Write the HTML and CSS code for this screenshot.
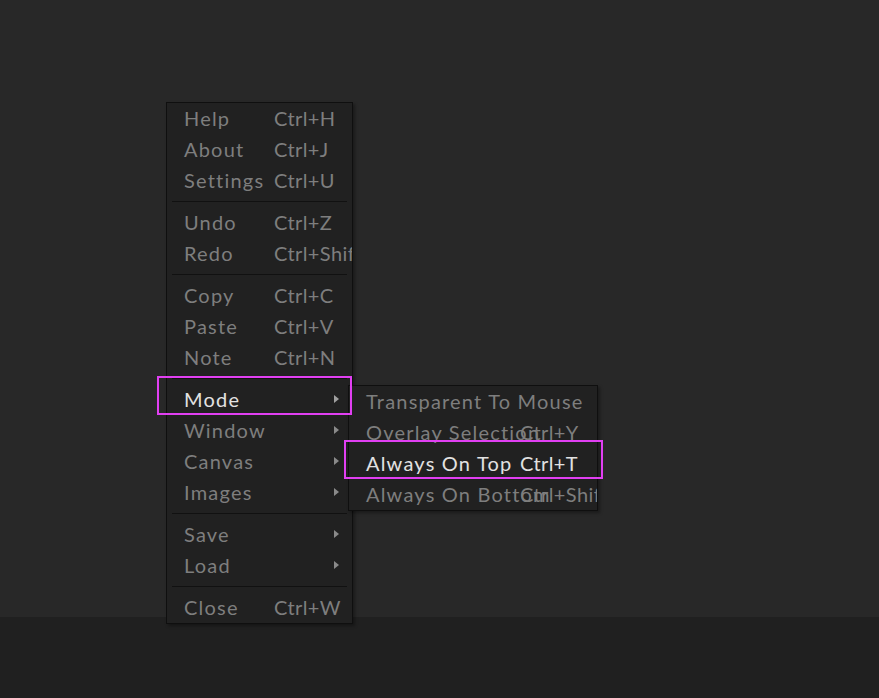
FILE: index.html
```html
<!DOCTYPE html>
<html>
<head>
<meta charset="utf-8">
<link rel="stylesheet" href="styles.css">
</head>
<body>
<div class="stage"></div>
<div class="footer"></div>

<div class="menu main-menu">
  <div class="item"><span class="label">Help</span><span class="key">Ctrl+H</span></div>
  <div class="item"><span class="label">About</span><span class="key">Ctrl+J</span></div>
  <div class="item"><span class="label">Settings</span><span class="key">Ctrl+U</span></div>
  <div class="sep"></div>
  <div class="item"><span class="label">Undo</span><span class="key">Ctrl+Z</span></div>
  <div class="item"><span class="label">Redo</span><span class="key">Ctrl+Shift+Z</span></div>
  <div class="sep"></div>
  <div class="item"><span class="label">Copy</span><span class="key">Ctrl+C</span></div>
  <div class="item"><span class="label">Paste</span><span class="key">Ctrl+V</span></div>
  <div class="item"><span class="label">Note</span><span class="key">Ctrl+N</span></div>
  <div class="sep"></div>
  <div class="item active"><span class="label">Mode</span><span class="arrow"></span></div>
  <div class="item"><span class="label">Window</span><span class="arrow"></span></div>
  <div class="item"><span class="label">Canvas</span><span class="arrow"></span></div>
  <div class="item"><span class="label">Images</span><span class="arrow"></span></div>
  <div class="sep"></div>
  <div class="item"><span class="label">Save</span><span class="arrow"></span></div>
  <div class="item"><span class="label">Load</span><span class="arrow"></span></div>
  <div class="sep"></div>
  <div class="item"><span class="label">Close</span><span class="key">Ctrl+W</span></div>
</div>

<div class="menu sub-menu">
  <div class="item"><span class="label">Transparent To Mouse</span></div>
  <div class="item"><span class="label">Overlay Selection</span><span class="key">Ctrl+Y</span></div>
  <div class="item active"><span class="label">Always On Top</span><span class="key">Ctrl+T</span></div>
  <div class="item"><span class="label">Always On Bottom</span><span class="key">Ctrl+Shift+B</span></div>
</div>

<div class="focus focus-mode"></div>
<div class="focus focus-top"></div>
</body>
</html>
```

FILE: styles.css
```css
html, body {
  margin: 0;
  padding: 0;
  height: 100%;
}
body {
  display: flex;
  flex-direction: column;
  background: #282828;
  font-family: "Lato", "Noto Sans", sans-serif;
  overflow: hidden;
}
.stage {
  flex: 1;
  background: #282828;
}
.footer {
  height: 81px;
  background: #202020;
}
.menu {
  position: absolute;
  background: #212121;
  border: 1px solid #0f0f0f;
  box-shadow: 2px 2px 3px rgba(0, 0, 0, 0.35);
  overflow: hidden;
  font-size: 20px;
  color: #7e7e7e;
}
.main-menu {
  left: 166px;
  top: 102px;
  width: 185px;
}
.sub-menu {
  left: 348px;
  top: 385px;
  width: 248px;
}
.item {
  position: relative;
  height: 31px;
  box-sizing: border-box;
  padding-bottom: 2px;
  display: flex;
  align-items: center;
  padding-left: 17px;
  white-space: nowrap;
}
.label {
  letter-spacing: 1.2px;
}
.main-menu .label {
  flex: 0 0 90px;
}
.sub-menu .label {
  flex: 0 0 154px;
  width: 0;
  overflow: visible;
}
.key {
  flex: none;
  letter-spacing: 0.4px;
}
.item.active {
  color: #e2e2e2;
}
.arrow {
  position: absolute;
  right: 13px;
  top: 11px;
  width: 0;
  height: 0;
  border-top: 4.5px solid transparent;
  border-bottom: 4.5px solid transparent;
  border-left: 5px solid #8a8a8a;
}
.item.active .arrow {
  border-left-color: #a0a0a0;
}
.sep {
  height: 1px;
  margin: 5px 5px;
  background: #111111;
}
.focus {
  position: absolute;
  border: 2px solid #e13ff2;
  box-sizing: border-box;
  pointer-events: none;
}
.focus-mode {
  left: 157px;
  top: 376px;
  width: 195px;
  height: 39px;
}
.focus-top {
  left: 344px;
  top: 440px;
  width: 259px;
  height: 39px;
}
```
